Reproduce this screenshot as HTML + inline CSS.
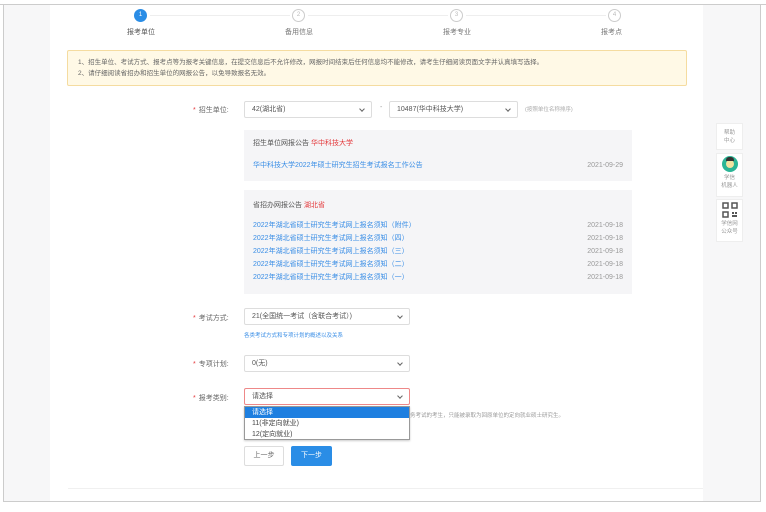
<!DOCTYPE html>
<html><head><meta charset="utf-8"><style>
*{box-sizing:border-box;margin:0;padding:0}
body{width:766px;height:512px;background:#fff;font-family:"Liberation Sans","Noto Sans CJK SC",sans-serif;font-size:7px;color:#555;position:relative;overflow:hidden}
.abs{position:absolute}
.frame{left:3px;top:4px;width:758px;height:498px;border:1px solid #ccc;border-top:1px solid #ddd;background:#f7f7f8}
.main{left:50px;top:5px;width:653px;height:496px;background:#fff}
.circ{width:13px;height:13px;border-radius:50%;border:1px solid #ccc;color:#bbb;font-size:6px;text-align:center;line-height:11px;background:#fff}
.circ.on{background:#2a8de6;border-color:#2a8de6;color:#fff}
.sl{font-size:7px;color:#777;white-space:nowrap}
.line{height:1px;background:#eee}
.notice{left:67px;top:50px;width:620px;height:36px;background:#fff9e6;border:1px solid #f5dca0;border-radius:2px;padding:6px 10px;line-height:11px;font-size:6.5px;color:#666}
.lab{font-size:7px;color:#666;white-space:nowrap}
.lab b{color:#e4393c;font-weight:normal;margin-right:3px}
.sel{height:17px;border:1px solid #ddd;border-radius:2px;background:#fff;padding-left:7px;line-height:15px;font-size:7px;color:#555}
.sel:after{content:"";position:absolute;right:7px;top:5px;width:3px;height:3px;border-right:1px solid #666;border-bottom:1px solid #666;transform:rotate(45deg)}
.panel{background:#f5f5f7}
.blue{color:#3a8ee6}
.red{color:#e4393c}
.row{position:absolute;left:9px;right:9px;font-size:7px;line-height:10px}
.row span{position:absolute;right:0;color:#999}
.side{left:716px;width:27px;border:1px solid #eee;background:#fff;text-align:center;color:#999;font-size:5.5px;line-height:8px}
</style></head><body>
<div class="abs frame"></div>
<div class="abs main"></div>
<div class="abs" style="left:0;top:4px;width:766px;height:1px;background:#ccc"></div>

<div class="abs line" style="left:150px;top:15px;width:140px"></div>
<div class="abs line" style="left:308px;top:15px;width:140px"></div>
<div class="abs line" style="left:466px;top:15px;width:140px"></div>
<div class="abs circ on" style="left:134px;top:9px">1</div>
<div class="abs circ" style="left:292px;top:9px">2</div>
<div class="abs circ" style="left:450px;top:9px">3</div>
<div class="abs circ" style="left:608px;top:9px">4</div>
<div class="abs sl" style="left:127px;top:27px;color:#555">报考单位</div>
<div class="abs sl" style="left:285px;top:27px">备用信息</div>
<div class="abs sl" style="left:443px;top:27px">报考专业</div>
<div class="abs sl" style="left:601px;top:27px">报考点</div>

<div class="abs notice">1、招生单位、考试方式、报考点等为报考关键信息，在提交信息后不允许修改，网报时间结束后任何信息均不能修改，请考生仔细阅读页面文字并认真填写选择。<br>2、请仔细阅读省招办和招生单位的网报公告，以免导致报名无效。</div>

<div class="abs lab" style="left:193px;top:105px"><b>*</b>招生单位:</div>
<div class="abs sel" style="left:244px;top:101px;width:128px">42(湖北省)</div>
<div class="abs" style="left:380px;top:104px;color:#999">-</div>
<div class="abs sel" style="left:389px;top:101px;width:129px">10487(华中科技大学)</div>
<div class="abs" style="left:525px;top:105px;font-size:5.5px;color:#aaa">(按照单位名称排序)</div>

<div class="abs panel" style="left:244px;top:130px;width:388px;height:51px">
<div class="row" style="top:9px">招生单位网报公告 <i class="red" style="font-style:normal">华中科技大学</i></div>
<div class="row blue" style="top:31px">华中科技大学2022年硕士研究生招生考试报名工作公告<span>2021-09-29</span></div>
</div>
<div class="abs panel" style="left:244px;top:190px;width:388px;height:104px">
<div class="row" style="top:11px">省招办网报公告 <i class="red" style="font-style:normal">湖北省</i></div>
<div class="row blue" style="top:31px">2022年湖北省硕士研究生考试网上报名须知（附件）<span>2021-09-18</span></div>
<div class="row blue" style="top:44px">2022年湖北省硕士研究生考试网上报名须知（四）<span>2021-09-18</span></div>
<div class="row blue" style="top:57px">2022年湖北省硕士研究生考试网上报名须知（三）<span>2021-09-18</span></div>
<div class="row blue" style="top:70px">2022年湖北省硕士研究生考试网上报名须知（二）<span>2021-09-18</span></div>
<div class="row blue" style="top:83px">2022年湖北省硕士研究生考试网上报名须知（一）<span>2021-09-18</span></div>
</div>

<div class="abs lab" style="left:193px;top:313px"><b>*</b>考试方式:</div>
<div class="abs sel" style="left:244px;top:308px;width:166px">21(全国统一考试（含联合考试）)</div>
<div class="abs blue" style="left:244px;top:331px;font-size:5.5px">各类考试方式和专项计划的概述以及关系</div>

<div class="abs lab" style="left:193px;top:359px"><b>*</b>专项计划:</div>
<div class="abs sel" style="left:244px;top:355px;width:166px">0(无)</div>

<div class="abs lab" style="left:193px;top:393px"><b>*</b>报考类别:</div>
<div class="abs sel" style="left:244px;top:388px;width:166px;border-color:#e88">请选择</div>
<div class="abs" style="left:410px;top:411px;font-size:5.5px;color:#999">务考试的考生，只能被录取为回原单位的定向就业硕士研究生。</div>
<div class="abs" style="left:244px;top:406px;width:166px;height:34px;border:1px solid #999;background:#fff;box-shadow:0 1px 2px rgba(0,0,0,.2);font-size:7px;line-height:11px">
<div style="background:#1e7fe0;color:#fff;padding-left:7px">请选择</div>
<div style="padding-left:7px;color:#444">11(非定向就业)</div>
<div style="padding-left:7px;color:#444">12(定向就业)</div>
</div>

<div class="abs" style="left:244px;top:446px;width:40px;height:20px;border:1px solid #ddd;border-radius:2px;text-align:center;line-height:18px;color:#666">上一步</div>
<div class="abs" style="left:291px;top:446px;width:41px;height:20px;background:#2a8de6;border-radius:2px;text-align:center;line-height:20px;color:#fff">下一步</div>

<div class="abs line" style="left:68px;top:488px;width:635px;background:#f0f0f0"></div>

<div class="abs side" style="top:123px;height:27px;padding-top:5px">帮助<br>中心</div>
<div class="abs side" style="top:153px;height:44px;padding-top:2px">
<div style="width:16px;height:16px;border-radius:50%;background:#2bb596;margin:0 auto 2px;position:relative"><div style="position:absolute;left:4px;top:4px;width:8px;height:8px;border-radius:50%;background:#f3e2a0"></div><div style="position:absolute;left:4px;top:1px;width:8px;height:4px;background:#333;border-radius:3px 3px 0 0"></div></div>学信<br>机器人</div>
<div class="abs side" style="top:199px;height:43px;padding-top:2px">
<svg width="16" height="16" viewBox="0 0 16 16" style="display:block;margin:0 auto 2px"><g fill="none" stroke="#555" stroke-width="1.5"><rect x="1" y="1" width="5" height="5"/><rect x="10" y="1" width="5" height="5"/><rect x="1" y="10" width="5" height="5"/></g><g fill="#555"><rect x="10" y="10" width="2" height="2"/><rect x="13" y="10" width="2" height="2"/><rect x="10" y="13" width="5" height="2"/></g></svg>学信网<br>公众号</div>
</body></html>
